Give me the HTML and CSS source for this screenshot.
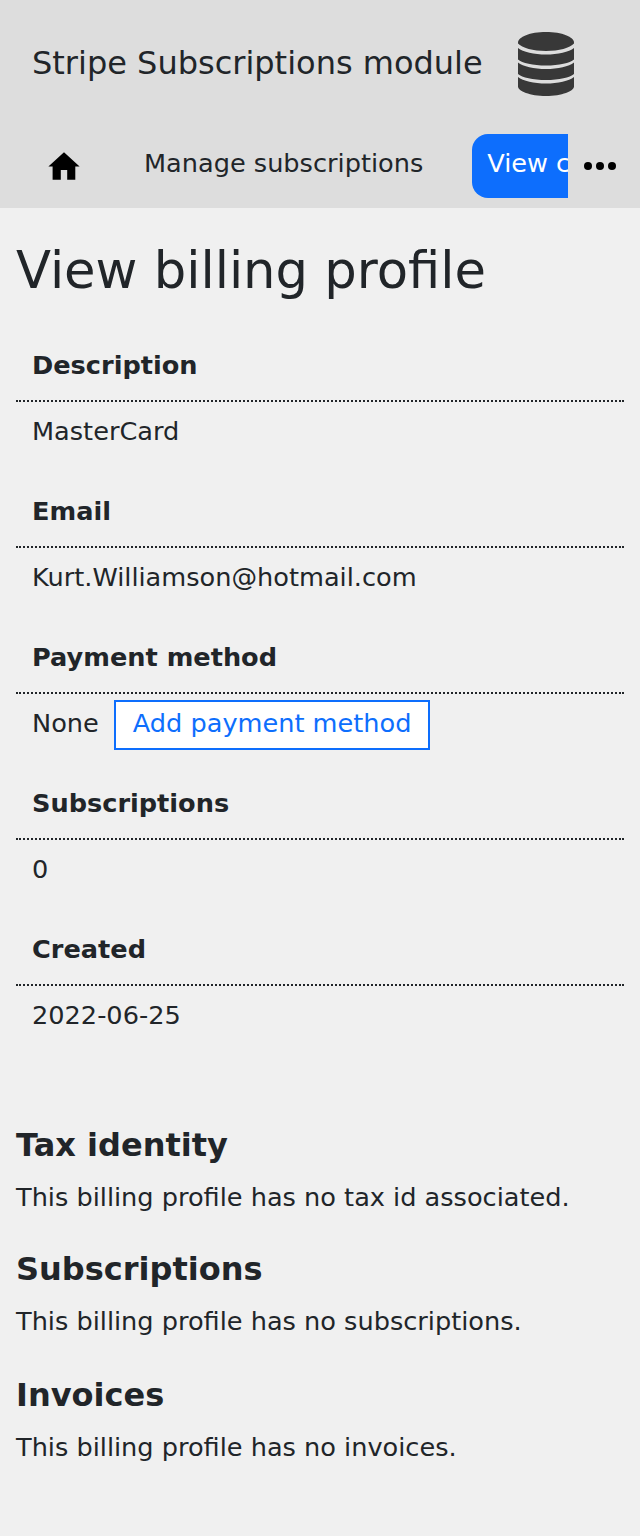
FILE: index.html
```html
<!DOCTYPE html>
<html lang="en">
<head>
<meta charset="utf-8">
<title>View billing profile</title>
<link rel="stylesheet" href="styles.css">
</head>
<body>
<header class="header">
  <div class="brand">
    <span class="brand-name">Stripe Subscriptions module</span>
    <svg class="brand-icon" viewBox="0 0 56 64" aria-hidden="true">
      <path d="M0 10.500C0 5 12 0 28 0s28 5 28 10.500v1C52 16 41 19 28 19S4 16 0 11.500z"/>
      <path d="M0 16c5 4 16 6.500 28 6.500S51 20 56 16v11.500C52 31 41 33.500 28 33.500S4 31 0 27.500z"/>
      <path d="M0 30.500c5 4 16 6.500 28 6.500s23-2.500 28-6.500V42c-4 3.500-15 6-28 6S4 45.500 0 42z"/>
      <path d="M0 45c5 4 16 6.500 28 6.500S51 49 56 45v9.500C56 59 44 64 28 64S0 59 0 54.500z"/>
    </svg>
  </div>
  <nav class="nav">
    <div class="links">
      <a class="home"><svg viewBox="0 0 32 28"><path d="M16 .3.400 14.500h4.200v13.200h8.200V18h6.400v9.700h8.100V14.500h4.300z"/></svg></a>
      <a class="link">Manage subscriptions</a>
      <a class="link active">View customer</a>
    </div>
    <a class="more"><svg viewBox="0 0 32 8"><circle cx="4" cy="4" r="4"/><circle cx="16" cy="4" r="4"/><circle cx="28" cy="4" r="4"/></svg></a>
  </nav>
</header>
<main class="main">
  <h1 class="title">View billing profile</h1>
  <dl class="details">
    <dt class="term">Description</dt><dd class="value">MasterCard</dd>
    <dt class="term">Email</dt><dd class="value">Kurt.Williamson@hotmail.com</dd>
    <dt class="term">Payment method</dt><dd class="value">None <a class="button">Add payment method</a></dd>
    <dt class="term">Subscriptions</dt><dd class="value">0</dd>
    <dt class="term">Created</dt><dd class="value">2022-06-25</dd>
  </dl>
  <section class="section"><h2 class="subtitle">Tax identity</h2><p class="text">This billing profile has no tax id associated.</p></section>
  <section class="section section-tall"><h2 class="subtitle">Subscriptions</h2><p class="text">This billing profile has no subscriptions.</p></section>
  <section class="section"><h2 class="subtitle">Invoices</h2><p class="text">This billing profile has no invoices.</p></section>
</main>
</body>
</html>
```
FILE: styles.css
```css
* { box-sizing: border-box; }
body {
  margin: 0;
  min-height: 1536px;
  background: #f0f0f0;
  color: #212529;
  font: 25.6px/38px "DejaVu Sans", sans-serif;
}
svg { display: block; }
.header { height: 208px; background: #ddd; }
.brand { display: flex; align-items: center; height: 128px; padding: 0 32px; gap: 35px; }
.brand-name { font-size: 32px; line-height: 48px; padding-bottom: 2px; white-space: nowrap; }
.brand-icon { width: 56px; height: 64px; fill: #383838; }
.nav { display: flex; height: 80px; }
.links { display: flex; width: 568px; overflow: hidden; padding-top: 6px; }
.home { flex: none; width: 128px; padding: 18px 0 0 48px; }
.home svg { width: 32px; height: 28px; }
.link { flex: none; height: 64px; padding: 10px 16px; white-space: nowrap; }
.active { margin-left: 33px; padding-left: 15px; border-radius: 16px; background: #0d6efd; color: #fff; }
.more { padding: 34px 0 0 16px; }
.more svg { width: 32px; height: 8px; }
.main { padding: 32px 16px 0; }
.title { margin: 0; font-size: 51.2px; font-weight: 400; line-height: 61px; }
.details { margin: 27px 0 68px; }
.term { height: 74px; padding: 18px 16px 0; border-bottom: 2px dotted #212529; font-weight: 700; }
.value { display: flex; gap: 15px; height: 72px; margin: 0; padding: 10px 16px 0; }
.button { height: 50px; margin-top: -4px; padding: 2px 17px; border: 2px solid #0d6efd; background: #fff; color: #0d6efd; }
.section { height: 124px; }
.section-tall { height: 126px; }
.subtitle { margin: 0 0 14px; font-size: 32px; font-weight: 700; line-height: 38px; }
.text { margin: 0; }
```
